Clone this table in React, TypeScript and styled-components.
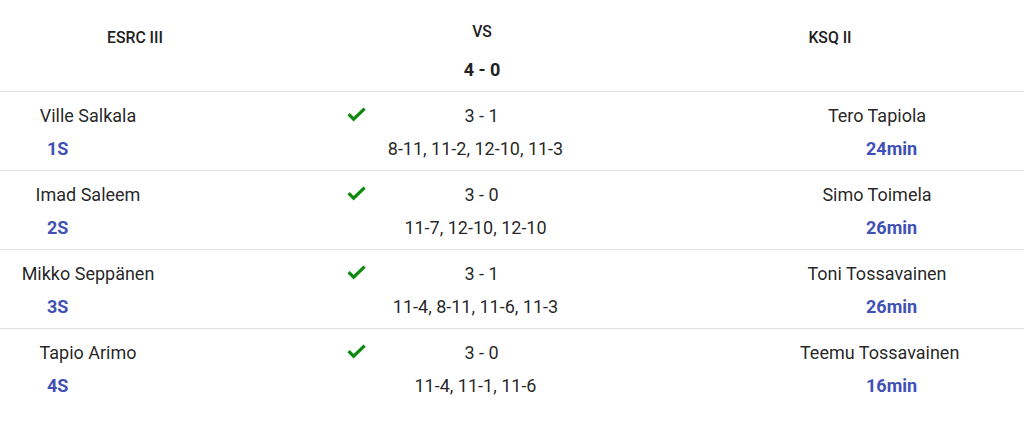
import styled, { createGlobalStyle } from 'styled-components'

const GlobalStyle = createGlobalStyle`
  body {
    margin: 0;
    background: #ffffff;
    font-family: Roboto, 'Liberation Sans', sans-serif;
    color: rgba(0, 0, 0, 0.87);
  }
`;

interface Match {
  home: string;
  away: string;
  tag: string;
  time: string;
  score: string;
  sets: string;
}

const matches: Match[] = [
  { home: 'Ville Salkala', away: 'Tero Tapiola', tag: '1S', time: '24min', score: '3 - 1', sets: '8-11, 11-2, 12-10, 11-3' },
  { home: 'Imad Saleem', away: 'Simo Toimela', tag: '2S', time: '26min', score: '3 - 0', sets: '11-7, 12-10, 12-10' },
  { home: 'Mikko Seppänen', away: 'Toni Tossavainen', tag: '3S', time: '26min', score: '3 - 1', sets: '11-4, 8-11, 11-6, 11-3' },
  { home: 'Tapio Arimo', away: 'Teemu Tossavainen', tag: '4S', time: '16min', score: '3 - 0', sets: '11-4, 11-1, 11-6' },
];

// chunky win tick
const CheckIcon = () => (
  <svg width="21" height="15" viewBox="0 0 21 15">
    <polyline
      points="2.6,7.2 7.6,12.2 18.6,1.6"
      fill="none"
      stroke="#0b8a0b"
      strokeWidth="3.2"
    />
  </svg>
);

const App = () => {
  return (
    <Board>
      <GlobalStyle />
      <Header>
        <TeamName>ESRC III</TeamName>
        <Versus>
          <VsLabel>VS</VsLabel>
          <Total>4 - 0</Total>
        </Versus>
        <TeamName>KSQ II</TeamName>
      </Header>
      {matches.map((m) => (
        <Row key={m.tag}>
          <Player>
            <Name>{m.home}</Name>
            <Tag $indent={47}>{m.tag}</Tag>
          </Player>
          <Spacer />
          <Mark>
            <CheckIcon />
          </Mark>
          <Result>
            <Score>{m.score}</Score>
            <Sets>{m.sets}</Sets>
          </Result>
          <Spacer />
          <Player>
            <Name>{m.away}</Name>
            <Tag $indent={66}>{m.time}</Tag>
          </Player>
          <Spacer />
        </Row>
      ))}
    </Board>
  );
}

const Board = styled.div`
  width: 1024px;
  display: flex;
  flex-direction: column;
`;

const Header = styled.div`
  display: grid;
  grid-template-columns: 270px 424px 272px 58px;
  height: 91px;
  border-bottom: 1px solid #e0e0e0;
  box-sizing: content-box;
`;

const TeamName = styled.div`
  padding-top: 28px;
  text-align: center;
  font-size: 15.75px;
  line-height: 20px;
  font-weight: 500;
  color: #212121;
`;

const Versus = styled.div`
  padding-top: 22px;
  display: flex;
  flex-direction: column;
  align-items: center;
  gap: 16px;
  color: #212121;
`;

const VsLabel = styled.div`
  font-size: 15.75px;
  line-height: 20px;
  font-weight: 500;
`;

const Total = styled.div`
  font-size: 18px;
  line-height: 24px;
  font-weight: 700;
`;

const Row = styled.div`
  display: grid;
  grid-template-columns: 176px 170px 21px 217px 216px 154px 70px;
  padding: 12px 0 9px;
  border-bottom: 1px solid #e0e0e0;

  &:last-child {
    border-bottom: none;
  }
`;

const Spacer = styled.div``;

const Player = styled.div`
  display: flex;
  flex-direction: column;
  gap: 9px;
`;

const Name = styled.div`
  font-size: 18px;
  line-height: 24px;
  text-align: center;
  white-space: nowrap;
`;

const Tag = styled.div<{ $indent: number }>`
  font-size: 18px;
  line-height: 24px;
  font-weight: 700;
  color: #3f51b5;
  white-space: nowrap;
  padding-left: ${(p) => p.$indent}px;
`;

const Mark = styled.div`
  height: 15px;
  margin-top: 3px;
`;

const Result = styled.div`
  display: flex;
  flex-direction: column;
  align-items: center;
  gap: 9px;
  font-size: 18px;
  line-height: 24px;
`;

const Score = styled.div`
  padding-left: 12px;
`;

const Sets = styled.div`
  white-space: nowrap;
`;

export default App;
